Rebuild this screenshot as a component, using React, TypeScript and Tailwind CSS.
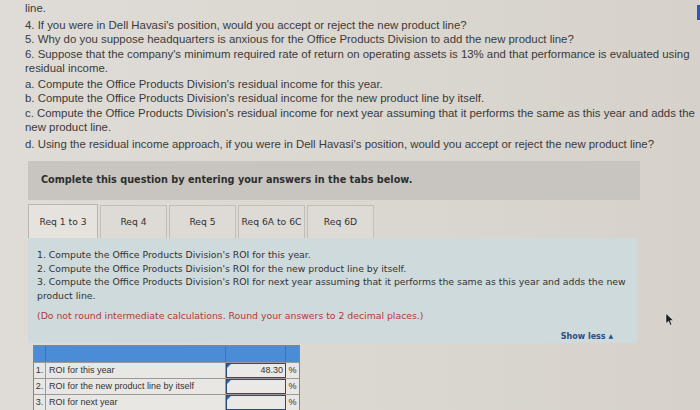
import React from "react";

const rows = [
  { n: "1.", label: "ROI for this year", value: "48.30" },
  { n: "2.", label: "ROI for the new product line by itself", value: "" },
  { n: "3.", label: "ROI for next year", value: "" },
];

const tabs = ["Req 1 to 3", "Req 4", "Req 5", "Req 6A to 6C", "Req 6D"];

export default function App() {
  return (
    <div className="relative w-[700px] h-[410px] overflow-hidden bg-[linear-gradient(90deg,#dfdcd7_0%,#dad6d0_60%,#d6d1cb_100%)] font-['Liberation_Sans',Arial,sans-serif]">
      <div className="pl-[25px] pt-[1px] text-[11.4px] leading-[14.5px] text-[#3a3a3a] whitespace-nowrap">
        <p>line.</p>
        <p className="mt-[2px]">4. If you were in Dell Havasi's position, would you accept or reject the new product line?</p>
        <p>5. Why do you suppose headquarters is anxious for the Office Products Division to add the new product line?</p>
        <p>6. Suppose that the company's minimum required rate of return on operating assets is 13% and that performance is evaluated using</p>
        <p>residual income.</p>
        <p className="mt-[1px]">a. Compute the Office Products Division's residual income for this year.</p>
        <p>b. Compute the Office Products Division's residual income for the new product line by itself.</p>
        <p>c. Compute the Office Products Division's residual income for next year assuming that it performs the same as this year and adds the</p>
        <p>new product line.</p>
        <p className="mt-[2px]">d. Using the residual income approach, if you were in Dell Havasi's position, would you accept or reject the new product line?</p>
      </div>

      <div className="ml-[28px] mt-[10px] w-[612px] h-[39px] bg-[#c8c5c0] flex items-center pl-[13px]">
        <span className="font-['DejaVu_Sans',Verdana,sans-serif] font-bold text-[9.7px] text-[#2e2e2e] whitespace-nowrap">
          Complete this question by entering your answers in the tabs below.
        </span>
      </div>

      <div className="ml-[28px] mt-[4px] flex gap-[2px] h-[34px] items-end">
        {tabs.map((t, i) => (
          <div
            key={t}
            className={
              i === 0
                ? "w-[70px] h-[34px] bg-[#e6e3de] border border-b-0 border-[#b9b5af] flex items-center justify-center font-['DejaVu_Sans',Verdana,sans-serif] text-[9.2px] text-[#333] whitespace-nowrap"
                : "w-[67px] h-[33px] bg-[#dedad5] border border-b-0 border-[#c2beb8] flex items-center justify-center font-['DejaVu_Sans',Verdana,sans-serif] text-[9.2px] text-[#333] whitespace-nowrap"
            }
          >
            {t}
          </div>
        ))}
      </div>

      <div className="ml-[28px] w-[609px] h-[105px] bg-[#cfdadc] pl-[9px] pr-[4px] pt-[10px] font-['DejaVu_Sans',Verdana,sans-serif] text-[9.3px] leading-[13.5px] text-[#333] flex flex-col whitespace-nowrap">
        <p>1. Compute the Office Products Division's ROI for this year.</p>
        <p>2. Compute the Office Products Division's ROI for the new product line by itself.</p>
        <p>3. Compute the Office Products Division's ROI for next year assuming that it performs the same as this year and adds the new</p>
        <p>product line.</p>
        <p className="mt-[7px] text-[#b03a34]">(Do not round intermediate calculations. Round your answers to 2 decimal places.)</p>
        <div className="flex justify-end mt-[6px] pr-[20px]">
          <span className="font-bold text-[8px] text-[#2c4c86]">Show less <span className="text-[6px] align-[1px]">▲</span></span>
        </div>
      </div>

      <div className="ml-[33px] mt-[2px] w-[267px] border border-[#7d8796] font-['Liberation_Sans',Arial,sans-serif] text-[9px] text-[#333]">
        <div className="flex h-[16px] bg-[#4a8dd6]">
          <div className="w-[12px] border-r border-[#3d74b3]" />
          <div className="w-[180px] border-r border-[#3d74b3]" />
          <div className="w-[60px] border-r border-[#3d74b3]" />
          <div className="flex-1" />
        </div>
        {rows.map((r) => (
          <div key={r.n} className="flex h-[16px] border-t border-[#9a9a9a] bg-[#e9e7e3]">
            <div className="w-[12px] border-r border-[#9a9a9a] flex items-center justify-center">{r.n}</div>
            <div className="w-[180px] border-r border-[#9a9a9a] flex items-center pl-[3px] whitespace-nowrap">{r.label}</div>
            <div className="relative w-[60px] border-[1.5px] border-[#2c4a7a] bg-[#ebe9e5] flex items-center justify-end pr-[2px]">
              <span className="absolute left-0 top-0 w-0 h-0 border-t-[4px] border-r-[4px] border-t-[#2f63c0] border-r-transparent" />
              {r.value}
            </div>
            <div className="flex-1 flex items-center justify-center">%</div>
          </div>
        ))}
      </div>

      <svg className="absolute left-[665px] top-[313px]" width="9" height="13" viewBox="0 0 9 13">
        <path d="M1 0.5 L1 10.5 L3.5 8.2 L5.3 12.2 L6.8 11.5 L5.1 7.6 L8.3 7.4 Z" fill="#1a1a1a" stroke="#f2f2f2" strokeWidth="0.5" />
      </svg>
      <div className="absolute right-0 top-[5px] w-[3px] h-[15px] bg-[#2b57b8]" />
    </div>
  );
}
